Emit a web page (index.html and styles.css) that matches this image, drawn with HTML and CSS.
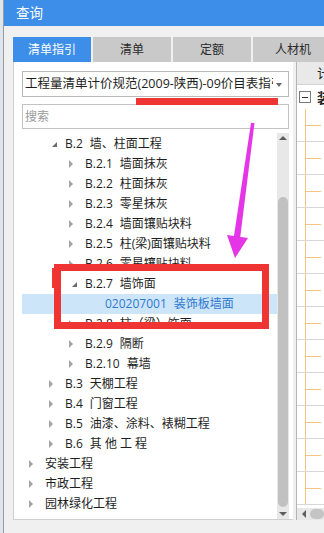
FILE: index.html
```html
<!DOCTYPE html>
<html lang="zh-CN">
<head>
    <meta charset="UTF-8">
    <title>查询</title>
    <link rel="stylesheet" href="styles.css">
</head>
<body>
    <div class="desk-edge"></div>

    <div class="dialog">
        <div class="titlebar">查询</div>

        <div class="dialog-body">
            <div class="tabs">
                <div class="tab active">清单指引</div>
                <div class="tab">清单</div>
                <div class="tab">定额</div>
                <div class="tab last">人材机</div>
            </div>

            <div class="workspace">
                <div class="panel">
                    <div class="select">
                        <span class="select-text">工程量清单计价规范(2009-陕西)-09价目表指引</span>
                        <span class="caret"></span>
                    </div>
                    <div class="search">搜索</div>

                    <div class="tree-wrap">
                        <ul class="tree">
                            <li class="l1 open"><span class="arrow"></span><span class="code">B.2</span>墙、柱面工程</li>
                            <li class="l2"><span class="arrow"></span><span class="code">B.2.1</span>墙面抹灰</li>
                            <li class="l2"><span class="arrow"></span><span class="code">B.2.2</span>柱面抹灰</li>
                            <li class="l2"><span class="arrow"></span><span class="code">B.2.3</span>零星抹灰</li>
                            <li class="l2"><span class="arrow"></span><span class="code">B.2.4</span>墙面镶贴块料</li>
                            <li class="l2"><span class="arrow"></span><span class="code">B.2.5</span>柱(梁)面镶贴块料</li>
                            <li class="l2"><span class="arrow"></span><span class="code">B.2.6</span>零星镶贴块料</li>
                            <li class="l2 open"><span class="arrow"></span><span class="code">B.2.7</span>墙饰面</li>
                            <li class="l3 selected"><span class="arrow"></span><span class="code">020207001</span>装饰板墙面</li>
                            <li class="l2"><span class="arrow"></span><span class="code">B.2.8</span>柱（梁）饰面</li>
                            <li class="l2"><span class="arrow"></span><span class="code">B.2.9</span>隔断</li>
                            <li class="l2"><span class="arrow"></span><span class="code">B.2.10</span>幕墙</li>
                            <li class="l1"><span class="arrow"></span><span class="code">B.3</span>天棚工程</li>
                            <li class="l1"><span class="arrow"></span><span class="code">B.4</span>门窗工程</li>
                            <li class="l1"><span class="arrow"></span><span class="code">B.5</span>油漆、涂料、裱糊工程</li>
                            <li class="l1"><span class="arrow"></span><span class="code">B.6</span>其 他 工 程</li>
                            <li class="l0"><span class="arrow"></span>安装工程</li>
                            <li class="l0"><span class="arrow"></span>市政工程</li>
                            <li class="l0"><span class="arrow"></span>园林绿化工程</li>
                        </ul>
                        <div class="vscroll">
                            <span class="step up"></span>
                            <span class="thumb"></span>
                            <span class="step down"></span>
                        </div>
                    </div>
                </div>

                <div class="grid-panel">
                    <div class="grid-head">计价</div>
                    <div class="grid-group"><span class="fold"></span>装饰</div>
                    <div class="grid-rows">
                        <div class="grid-row"><span class="stem"></span></div>
                        <div class="grid-row"><span class="stem"></span></div>
                        <div class="grid-row"><span class="stem"></span></div>
                        <div class="grid-row"><span class="stem"></span></div>
                        <div class="grid-row"><span class="stem"></span></div>
                        <div class="grid-row"><span class="stem"></span></div>
                        <div class="grid-row"><span class="stem"></span></div>
                        <div class="grid-row"><span class="stem"></span></div>
                        <div class="grid-row"><span class="stem"></span></div>
                        <div class="grid-row"><span class="stem"></span></div>
                        <div class="grid-row"><span class="stem"></span></div>
                        <div class="grid-row"><span class="stem"></span></div>
                    </div>
                    <div class="hscroll">
                        <span class="step left"></span>
                        <span class="hthumb"></span>
                    </div>
                </div>
            </div>
        </div>
    </div>

    <!-- annotations drawn over the screenshot -->
    <div class="mark-bar"></div>
    <div class="mark-box"></div>
    <div class="mark-tab"></div>
    <svg class="mark-arrow" width="324" height="533" viewBox="0 0 324 533">
        <polygon points="251,123 254.5,123 240,239 233.5,239" fill="#e436e6"/>
        <polygon points="227,235 248,238 235,258" fill="#e436e6"/>
    </svg>
</body>
</html>
```

FILE: styles.css
```css
:root {
    --title-blue: #3d8ee8;
    --window-bg: #f0f0f0;
    --tab-grey: #c9c9c9;
    --border-grey: #b9b9b9;
    --mark-red: #ef3434;
    --orange-line: #f4c57d;
}

* {
    box-sizing: border-box;
}

html, body {
    margin: 0;
    padding: 0;
}

body {
    width: 324px;
    height: 533px;
    overflow: hidden;
    display: flex;
    position: relative;
    font-family: "Open Sans", "Noto Sans CJK SC", sans-serif;
    color: #1e1e1e;
    background: var(--window-bg);
}

.desk-edge {
    width: 4px;
    flex: none;
    background: #dfe5ec;
    border-right: 1px solid #9a9a9a;
}

.dialog {
    flex: 1;
    min-width: 0;
    display: flex;
    flex-direction: column;
    background: var(--window-bg);
    overflow: hidden;
}

.titlebar {
    height: 26px;
    flex: none;
    line-height: 26px;
    padding-left: 12px;
    font-size: 13.5px;
    color: #fff;
    background: var(--title-blue);
}

.dialog-body {
    flex: 1;
    padding: 11px 0 0 9px;
    display: flex;
    flex-direction: column;
}

/* tabs */
.tabs {
    display: flex;
    gap: 2px;
    height: 25px;
    flex: none;
}

.tab {
    width: 78px;
    flex: none;
    text-align: center;
    line-height: 25px;
    font-size: 12px;
    color: #2a2a2a;
    background: var(--tab-grey);
}

.tab.active {
    background: var(--title-blue);
    color: #fff;
}

.tab.last {
    width: 80px;
}

.workspace {
    display: flex;
    height: 458px;
    flex: none;
    gap: 3px;
}

/* left panel */
.panel {
    width: 280px;
    flex: none;
    display: flex;
    flex-direction: column;
    padding: 9px 4px 0 8px;
    background: #fff;
    border-left: 1px solid #cfcfcf;
    border-bottom: 1px solid #cfcfcf;
}

.select {
    height: 26px;
    flex: none;
    position: relative;
    border: 1px solid var(--border-grey);
    padding: 0 15px 0 2px;
    overflow: hidden;
    white-space: nowrap;
    line-height: 24px;
    font-size: 12.5px;
}

.select-text {
    display: block;
    overflow: hidden;
}

.caret {
    position: absolute;
    right: 6px;
    top: 11px;
    border-top: 4px solid #6a6a6a;
    border-left: 3px solid transparent;
    border-right: 3px solid transparent;
}

.search {
    height: 25px;
    flex: none;
    margin-top: 7px;
    border: 1px solid #c3c3c3;
    padding-left: 2px;
    line-height: 23px;
    font-size: 12px;
    color: #9a9a9a;
}

.tree-wrap {
    flex: 1;
    min-height: 0;
    margin-top: 4px;
    display: flex;
}

.tree {
    flex: 1;
    list-style: none;
    margin: 0;
    padding: 1px 0 0;
    overflow: hidden;
    font-size: 12px;
}

.tree li {
    height: 20px;
    line-height: 20px;
    white-space: nowrap;
    display: flex;
    align-items: center;
}

.tree .l0 { padding-left: 7px; }
.tree .l1 { padding-left: 27px; }
.tree .l2 { padding-left: 47px; }
.tree .l3 { padding-left: 67px; }

.arrow {
    width: 16px;
    height: 20px;
    flex: none;
    position: relative;
}

.arrow::before {
    content: "";
    position: absolute;
    left: 0;
    top: 6px;
    border-left: 4px solid #a3a3a3;
    border-top: 4px solid transparent;
    border-bottom: 4px solid transparent;
}

.open .arrow::before {
    left: 3px;
    top: 8px;
    border-left: 5px solid transparent;
    border-bottom: 5px solid #6b6b6b;
    border-top: 0;
}

.l3 .arrow::before {
    display: none;
}

.code {
    margin-right: 7px;
}

.tree .selected {
    background: #cde5f9;
    color: #2f79cf;
}

/* vertical scrollbar */
.vscroll {
    width: 12px;
    flex: none;
    position: relative;
    display: flex;
    flex-direction: column;
    align-items: center;
    background: #e8e8e8;
}

.step {
    display: block;
    width: 0;
    height: 0;
    border-left: 4px solid transparent;
    border-right: 4px solid transparent;
}

.step.up {
    margin-top: 3px;
    border-bottom: 4px solid #5e5e5e;
}

.thumb {
    width: 10px;
    height: 310px;
    margin-top: 57px;
    border-radius: 5px;
    background: #c1c1c1;
}

.step.down {
    margin-top: 5px;
    border-top: 4px solid #5e5e5e;
}

/* right grid panel */
.grid-panel {
    flex: 1;
    min-width: 0;
    display: flex;
    flex-direction: column;
    background: #fff;
    border-left: 1px solid #b5b5b5;
    overflow: hidden;
}

.grid-head {
    height: 23px;
    flex: none;
    line-height: 23px;
    padding-left: 20px;
    font-size: 13px;
    white-space: nowrap;
    background: #e9e9e9;
    border-bottom: 1px solid #d2d2d2;
}

.grid-group {
    height: 24px;
    flex: none;
    display: flex;
    align-items: center;
    padding-left: 2px;
    font-size: 14px;
    font-weight: bold;
    white-space: nowrap;
}

.fold {
    width: 12px;
    height: 12px;
    flex: none;
    margin-right: 6px;
    border: 1px solid #7a7a7a;
    background: linear-gradient(#333, #333) no-repeat center / 6px 1px;
}

.grid-rows {
    flex: 1;
    min-height: 0;
    overflow: hidden;
}

.grid-row {
    height: 33px;
    padding-left: 8px;
    border-bottom: 1px solid #d8d8d8;
}

.stem {
    display: block;
    height: 100%;
    border-left: 1px solid var(--orange-line);
    background: linear-gradient(var(--orange-line), var(--orange-line)) no-repeat 0 50% / 15px 1px;
}

.hscroll {
    height: 12px;
    flex: none;
    display: flex;
    align-items: center;
    padding-left: 5px;
    background: #e8e8e8;
}

.step.left {
    border-top: 4px solid transparent;
    border-bottom: 4px solid transparent;
    border-left: 0;
    border-right: 4px solid #5e5e5e;
}

.hthumb {
    width: 40px;
    height: 10px;
    margin-left: 4px;
    border-radius: 5px;
    background: #c4c4c4;
}

/* annotations */
.mark-bar {
    position: absolute;
    left: 136px;
    top: 98px;
    width: 142px;
    height: 7px;
    background: var(--mark-red);
}

.mark-box {
    position: absolute;
    left: 54px;
    top: 264px;
    width: 215px;
    height: 65px;
    border: 7px solid var(--mark-red);
}

.mark-tab {
    position: absolute;
    left: 52px;
    top: 268px;
    width: 9px;
    height: 20px;
    background: var(--mark-red);
}

.mark-arrow {
    position: absolute;
    left: 0;
    top: 0;
    pointer-events: none;
}
```
